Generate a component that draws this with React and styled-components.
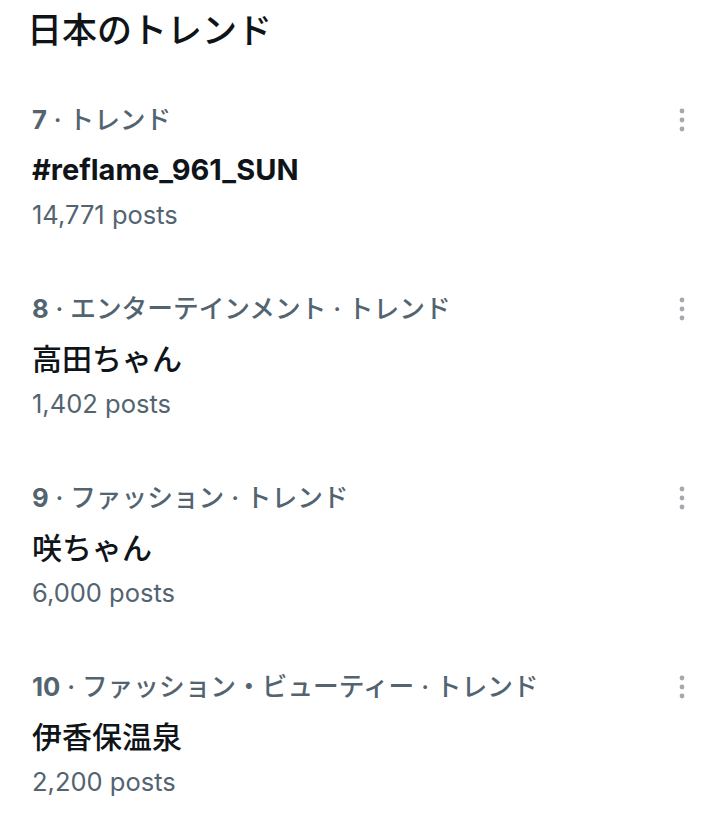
import React from "react";
import styled, { createGlobalStyle } from "styled-components";

const GlobalStyle = createGlobalStyle`
  body {
    margin: 0;
    background: #ffffff;
    font-family: Inter, "Noto Sans CJK JP", sans-serif;
    color: #0f1419;
  }
`;

const trends = [
  { rank: 7, category: "トレンド", name: "#reflame_961_SUN", latin: true, posts: "14,771" },
  { rank: 8, category: "エンターテインメント · トレンド", name: "高田ちゃん", posts: "1,402" },
  { rank: 9, category: "ファッション · トレンド", name: "咲ちゃん", posts: "6,000" },
  { rank: 10, category: "ファッション・ビューティー · トレンド", name: "伊香保温泉", posts: "2,200" },
];

const App = () => {
  return (
    <Page>
      <GlobalStyle />
      <Heading>日本のトレンド</Heading>
      <List>
        {trends.map((t) => (
          <Row key={t.rank}>
            <Info>
              <Meta>
                <Rank>{t.rank}</Rank> · {t.category}
              </Meta>
              <Name $latin={t.latin}>{t.name}</Name>
              <Count>{t.posts} posts</Count>
            </Info>
            <More aria-label="more">
              <svg width="8" height="24" viewBox="0 0 8 24">
                <circle cx="4" cy="3" r="2.4" />
                <circle cx="4" cy="12" r="2.4" />
                <circle cx="4" cy="21" r="2.4" />
              </svg>
            </More>
          </Row>
        ))}
      </List>
    </Page>
  );
};

const Page = styled.div`
  width: 720px;
  padding-top: 8px;
`;

const Heading = styled.h1`
  margin: 0;
  padding-left: 27px;
  font-size: 35px;
  line-height: 44px;
  font-weight: 500;
`;

const List = styled.div`
  display: flex;
  flex-direction: column;
  gap: 60px;
  margin-top: 52px;
`;

const Row = styled.div`
  display: flex;
  justify-content: space-between;
  align-items: flex-start;
  padding: 0 34px 0 32px;
`;

const Info = styled.div`
  display: flex;
  flex-direction: column;
`;

const Meta = styled.div`
  font-size: 25.7px;
  line-height: 32px;
  font-weight: 500;
  color: #536471;
`;

const Rank = styled.span`
  font-weight: 700;
`;

const Name = styled.div`
  margin-top: 14px;
  font-size: ${(p) => (p.$latin ? "29px" : "30px")};
  line-height: 40px;
  font-weight: ${(p) => (p.$latin ? 700 : 500)};
`;

const Count = styled.div`
  margin-top: 7px;
  font-size: 25.5px;
  line-height: 36px;
  color: #536471;
`;

const More = styled.div`
  padding-top: 4px;
  svg {
    display: block;
    fill: #a3a9ae;
  }
`;

export default App;
